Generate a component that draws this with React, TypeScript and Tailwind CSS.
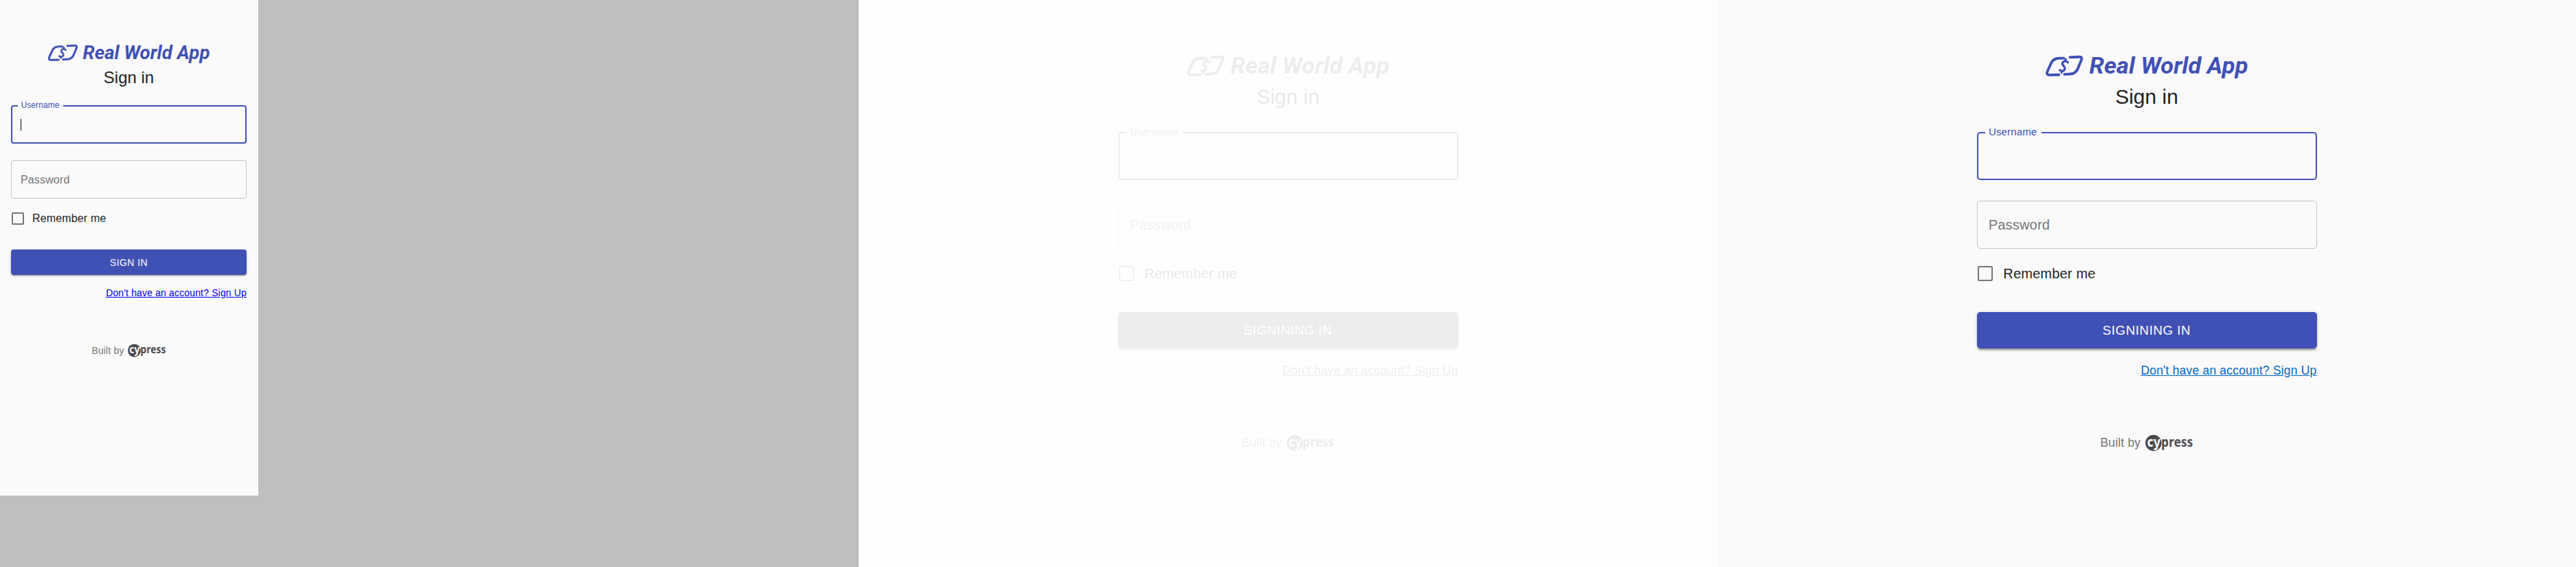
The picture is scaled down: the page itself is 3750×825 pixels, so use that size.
import React from "react";

function BrandLogo() {
  return (
    <svg width="237" height="36" viewBox="69 60 237 36" className="mx-auto block overflow-visible text-[#3f51b5]" role="img" aria-label="Real World App">
      <g
        transform="translate(55.63 56.07) scale(0.26667)"
        fill="none"
        stroke="currentColor"
        strokeWidth="11.500"
        strokeLinecap="round"
        strokeLinejoin="round"
      >
        <path d="M132 43.500L112 44C93 44.500 84 51 78 63L62 98C56 111 59 117 70 117L111 116" />
        <path d="M159 40L198 38C211 37.500 213 43 208 54L195 86C188 105 178 112 160 113L135 114" />
        <path d="M150 62C142 53 129 56 126 66C124 78 139 77 137 89C134 101 124 102 115 96" strokeWidth="10" />
        <path d="M138 53L141 48M124 103L122 107" strokeWidth="8.500" />
      </g>
      <text
        x="120.500"
        y="85.500"
        fontFamily="Roboto, sans-serif"
        fontSize="27"
        fontWeight="700"
        fontStyle="italic"
        textLength="185"
        lengthAdjust="spacingAndGlyphs"
        fill="currentColor"
      >
        Real World App
      </text>
    </svg>
  );
}

function CypressLogo() {
  return (
    <svg width="56" height="24" viewBox="0 -4 56 24" className="-mt-1 block overflow-visible" role="img" aria-label="cypress">
      <circle cx="9.500" cy="10" r="9.400" fill="#4a4a4d" />
      <g fontFamily="'Noto Sans', sans-serif" fontWeight="700" fontSize="16">
        <text x="2.200" y="14.200" textLength="15.500" lengthAdjust="spacingAndGlyphs" fill="#fff">
          cy
        </text>
        <text x="18.600" y="14.200" textLength="37" lengthAdjust="spacingAndGlyphs" fill="#4a4a4d">
          press
        </text>
      </g>
    </svg>
  );
}

type FormProps = {
  button: string;
  buttonClass: string;
  linkClass: string;
  caret?: boolean;
};

function SignInForm({ button, buttonClass, linkClass, caret }: FormProps) {
  return (
    <div className="flex flex-col pt-[60px] font-['Liberation_Sans',Arial,sans-serif] text-[#212121]">
      <BrandLogo />
      <h1 className="mt-px text-center text-2xl leading-8">Sign in</h1>
      <fieldset className="mt-[19px] h-[61.4px] rounded border-2 border-[#3f51b5]">
        <legend className="ml-2 h-3 w-[66px] pl-[4.4px] text-xs leading-[11px] tracking-[0.11px] text-[#3f51b5]">Username</legend>
        {caret && <div className="mt-[13px] ml-3 h-[17px] w-px bg-black" />}
      </fieldset>
      <div className="mt-6 flex h-14 items-center rounded border border-[#c0c0c0] px-[13px] pt-[0.5px] text-base tracking-[0.15px] text-[#757575]">
        Password
      </div>
      <label className="mt-2 flex h-[42px] items-center gap-3 pl-px text-base tracking-[0.15px]">
        <span className="size-[18px] rounded-[2px] border-2 border-[#757575]" />
        Remember me
      </label>
      <button
        className={
          "mt-6 rounded bg-[#3f51b5] font-medium text-white shadow-[0px_3px_1px_-2px_rgba(0,0,0,0.2),0px_2px_2px_0px_rgba(0,0,0,0.14),0px_1px_5px_0px_rgba(0,0,0,0.12)] " +
          buttonClass
        }
      >
        {button}
      </button>
      <a className={"self-end text-sm leading-5 tracking-[0.15px] underline " + linkClass}>Don't have an account? Sign Up</a>
      <div className="mt-16 flex items-center justify-center gap-[5px] text-sm leading-5 tracking-[0.15px] text-[#757575]">
        Built by
        <CypressLogo />
      </div>
    </div>
  );
}

function DesktopScreen() {
  return (
    <div className="h-[660px] w-[1000px] bg-[#fafafa] [zoom:1.25]">
      <div className="mx-auto w-[396px]">
        <SignInForm
          button="SIGNINING IN"
          buttonClass="h-[42.25px] text-[15px] tracking-[0.43px]"
          linkClass="mt-4 text-[#0068c9]"
        />
      </div>
    </div>
  );
}

export default function App() {
  return (
    <main className="flex h-[825px] w-[3750px] overflow-hidden bg-white">
      <section className="h-[825px] w-[1250px] bg-[#bfbfbf]">
        <div className="h-[721px] w-[376px] border-r border-b border-white bg-[#fafafa] px-4">
          <SignInForm
            button="SIGN IN"
            buttonClass="h-[36.5px] text-sm tracking-[0.4px]"
            linkClass="mt-4 text-[#0000ee]"
            caret
          />
        </div>
      </section>
      <section className="w-[1250px] opacity-[0.1] grayscale">
        <DesktopScreen />
      </section>
      <section className="w-[1250px]">
        <DesktopScreen />
      </section>
    </main>
  );
}
